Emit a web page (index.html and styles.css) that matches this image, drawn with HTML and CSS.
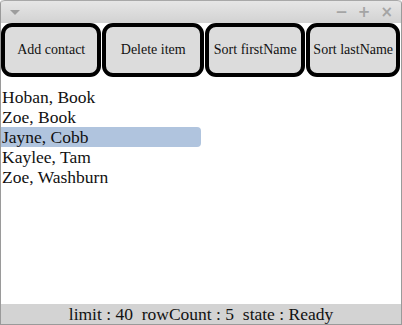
FILE: index.html
```html
<!DOCTYPE html>
<html>
<head>
    <link rel="stylesheet" href="styles.css">
    <title>Contacts</title>
</head>
<body>
    <div class="window">
        <div class="titlebar">
            <span class="menu-arrow"></span>
            <div class="controls">
                <span>&minus;</span>
                <span>+</span>
                <span>&times;</span>
            </div>
        </div>
        <div class="toolbar">
            <button class="btn btn-1">Add contact</button>
            <button class="btn btn-2">Delete item</button>
            <button class="btn btn-3">Sort firstName</button>
            <button class="btn btn-4">Sort lastName</button>
        </div>
        <ul class="list">
            <li>Hoban, Book</li>
            <li>Zoe, Book</li>
            <li class="selected">Jayne, Cobb</li>
            <li>Kaylee, Tam</li>
            <li>Zoe, Washburn</li>
        </ul>
        <div class="status">limit : 40&nbsp; rowCount : 5&nbsp; state : Ready</div>
    </div>
</body>
</html>
```

FILE: styles.css
```css
html, body {
    margin: 0;
    padding: 0;
    background: #ffffff;
}

.window {
    width: 402px;
    height: 325px;
    box-sizing: border-box;
    border: 1px solid #9a9a9a;
    border-top: none;
    border-radius: 4px 4px 0 0;
    display: flex;
    flex-direction: column;
    font-family: "Liberation Serif", serif;
    color: #111;
    overflow: hidden;
}

.titlebar {
    height: 23px;
    flex: none;
    background: linear-gradient(#e6e6e6, #d2d2d2);
    border-top: 1px solid #a8a8a8;
    border-radius: 4px 4px 0 0;
    box-sizing: border-box;
    display: flex;
    align-items: center;
    justify-content: space-between;
    padding: 0 8px 0 9px;
}

.menu-arrow {
    width: 0;
    height: 0;
    border-left: 5px solid transparent;
    border-right: 5px solid transparent;
    border-top: 5px solid #9d9d9d;
}

.controls {
    display: flex;
    gap: 10px;
    font-family: "DejaVu Sans", sans-serif;
    font-size: 15px;
    font-weight: bold;
    color: #a4a4a4;
}

.toolbar {
    display: flex;
    padding: 0;
    height: 54px;
    flex: none;
}

.btn {
    height: 54px;
    box-sizing: border-box;
    background: #dcdcdc;
    border: 4px solid #000;
    border-radius: 11px;
    font-family: "Liberation Serif", serif;
    font-size: 14px;
    color: #111;
    padding: 0;
    margin: 0 1px 0 0;
    white-space: nowrap;
}

.btn-1 { width: 101px; }
.btn-2 { width: 102px; }
.btn-3 { width: 101px; }
.btn-4 { width: 94px; }

.list {
    list-style: none;
    margin: 10px 0 0;
    padding: 0;
    flex: 1;
    font-size: 17.5px;
}

.list li {
    height: 20px;
    line-height: 20px;
    width: 200px;
    padding-left: 1px;
    box-sizing: border-box;
}

.list li.selected {
    background: #b0c4de;
    border-radius: 0 4px 4px 0;
}

.status {
    height: 20px;
    flex: none;
    background: #d3d3d3;
    text-align: center;
    font-size: 17.5px;
    line-height: 20px;
}
```
